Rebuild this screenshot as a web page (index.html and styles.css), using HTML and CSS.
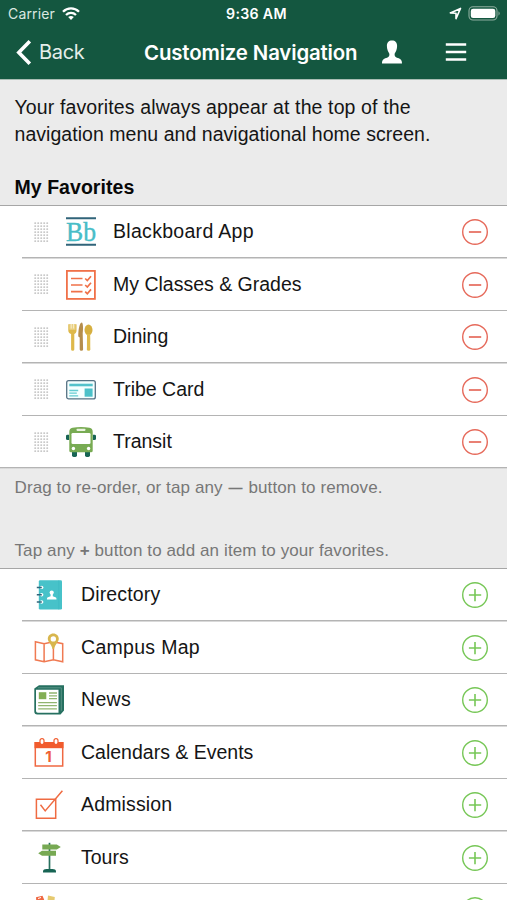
FILE: index.html
```html
<!DOCTYPE html>
<html lang="en">
<head>
<meta charset="utf-8">
<title>Customize Navigation</title>
<link rel="stylesheet" href="styles.css">
</head>
<body>
<svg width="0" height="0" class="defs" aria-hidden="true">
  <defs>
    <pattern id="dots" width="3" height="3" patternUnits="userSpaceOnUse"><rect x=".3" y=".3" width="1.8" height="1.8" rx=".5" fill="#c9c9c9"/></pattern>
    <symbol id="grip" viewBox="0 0 15 21"><rect width="15" height="21" fill="url(#dots)"/></symbol>
    <symbol id="minus" viewBox="0 0 28 28"><g fill="none" stroke="#e66a5b"><circle cx="14" cy="14" r="12.3" stroke-width="1.4"/><path d="M7.9 14h12.3" stroke-width="1.7"/></g></symbol>
    <symbol id="plus" viewBox="0 0 28 28"><g fill="none" stroke="#77c757"><circle cx="14" cy="14" r="12.3" stroke-width="1.4"/><path d="M7.9 14h12.3M14 7.9v12.3" stroke-width="1.6"/></g></symbol>
  </defs>
</svg>
<header class="header">
  <div class="status">
    <span class="carrier">Carrier</span>
    <svg class="wifi" width="18" height="13" viewBox="0 0 18 13"><g fill="none" stroke="#fff" stroke-width="2.3"><path d="M1 4.8C5.5.3 12.5.3 17 4.8"/><path d="M4 8c2.9-2.8 7.1-2.8 10 0"/></g><path d="M6.2 10.1q2.8-2.2 5.6 0L9 12.9z" fill="#fff"/></svg>
    <span class="time">9:36 AM</span>
    <svg class="arrow" width="13" height="13" viewBox="0 0 13 13"><path d="M1.300 5.900L11.500 1.400 7 11.600V6.200z" fill="none" stroke="#fff" stroke-width="1.600" stroke-linejoin="round"/></svg>
    <svg class="battery" width="33" height="15" viewBox="0 0 33 15"><rect x="1" y=".8" width="28" height="13.2" rx="4" fill="none" stroke="#8eae9f" stroke-width="1.1"/><rect x="2.8" y="2.7" width="24.5" height="9.4" rx="2.3" fill="#fff"/><path d="M30.5 5.2q2.4 2.2 0 4.5z" fill="#8eae9f"/></svg>
  </div>
  <div class="navbar">
    <svg class="chevron" width="16" height="27" viewBox="0 0 16 27"><path d="M13.8 2.2L2.8 13.4l11 11.3" fill="none" stroke="#fff" stroke-width="3.6"/></svg>
    <span class="back">Back</span>
    <h1 class="title">Customize Navigation</h1>
    <svg class="person" width="22" height="24" viewBox="0 0 22 24"><path d="M11 .5c3.2 0 5.2 2 5.1 5.5 0 1.7-.3 3.1-.8 4.6-.5 1.4-1.6 2.4-1.7 3.7-.1 2.6 1.2 3 3.2 3.7 2.8.9 4.2 1.8 4.2 5.6H1c0-3.8 1.4-4.7 4.2-5.6 2-.7 3.3-1.1 3.2-3.7-.1-1.3-1.2-2.3-1.7-3.7C6.200 9.100 5.900 7.700 5.900 6 5.800 2.500 7.800.5 11 .5z" fill="#fff"/></svg>
    <svg class="menu" width="22" height="20" viewBox="0 0 22 20"><path d="M.8 2.500h20.400M.8 10h20.400M.8 17.500h20.400" stroke="#fff" stroke-width="2.400"/></svg>
  </div>
</header>
<main>
  <section class="intro">
    <p class="lead"><span class="loose">Your favorites always appear at the top of the</span><br>navigation menu and navigational home screen.</p>
    <h2 class="heading">My Favorites</h2>
  </section>
  <ul class="list">
    <li class="row"><svg class="grip"><use href="#grip"/></svg>
      <svg class="icon" viewBox="0 0 30 30"><path d="M0 1.300h30M0 27.800h30" stroke="#31647a" stroke-width="1.900"/><text x="0" y="24.200" class="bb" textLength="30" lengthAdjust="spacingAndGlyphs">Bb</text></svg>
      <span class="label wide">Blackboard App</span><svg class="action"><use href="#minus"/></svg></li>
    <li class="row"><svg class="grip"><use href="#grip"/></svg>
      <svg class="icon" viewBox="0 0 30 30"><g fill="none" stroke="#f07149" stroke-width="1.800"><rect x=".9" y=".9" width="28" height="28"/><path d="M5 8.500h11.500M5 15h11.500M5 21.700h11.500M19.200 8.500l2.100 2 3.700-4.300M19.200 15l2.100 2 3.700-4.300M19.200 21.700l2.100 2 3.700-4.300" stroke-width="1.700"/></g></svg>
      <span class="label">My Classes &amp; Grades</span><svg class="action"><use href="#minus"/></svg></li>
    <li class="row"><svg class="grip"><use href="#grip"/></svg>
      <svg class="icon" viewBox="0 0 30 30"><path d="M2.300 2.300h8.200v6.200c0 1.800-.9 2.900-2.200 3.400v15.600q0 1.300-1.600 1.300t-1.600-1.300V11.900c-1.700-.5-2.800-1.600-2.800-3.400z" fill="#deb84a"/><path d="M3.300 2h6.200v5.800H3.300z" fill="#ead184"/><path d="M5.200 2v4.500M7.600 2v4.500" stroke="#fff" stroke-width=".6"/><path d="M12.300 14.500C12.300 7 13.600.6 16 .6c1.300 1.700 1.200 6.900.7 10.800l.4 16q0 1.400-1.700 1.400t-1.700-1.400V15.500z" fill="#b58d4c"/><ellipse cx="22.500" cy="7.900" rx="4" ry="5.300" fill="#d6af3f"/><path d="M21 12h3.200l.1 15.500q0 1.300-1.700 1.300t-1.700-1.300z" fill="#dfba4b"/></svg>
      <span class="label">Dining</span><svg class="action"><use href="#minus"/></svg></li>
    <li class="row"><svg class="grip"><use href="#grip"/></svg>
      <svg class="icon" viewBox="0 0 30 30"><rect x=".7" y="5.600" width="28.600" height="18.300" rx="2" fill="#f5ffff" stroke="#567284" stroke-width="1.300"/><path d="M3.300 10h23.400" stroke="#55c2cb" stroke-width="2.600"/><path d="M3.300 15.500h8.900M3.300 18.200h7.500M3.300 20.900h8.900" stroke="#65cbd1" stroke-width="1.300"/><path d="M18.600 13.500h8v8.200h-8z" fill="#4bc1c9"/></svg>
      <span class="label">Tribe Card</span><svg class="action"><use href="#minus"/></svg></li>
    <li class="row"><svg class="grip"><use href="#grip"/></svg>
      <svg class="icon" viewBox="0 0 30 30"><path d="M0 9q0-1.200 1.400-1.200h1.800V13H1.500Q0 13 0 11.700zM30 9q0-1.200-1.400-1.200h-1.800V13h1.700q1.500 0 1.500-1.300z" fill="#176454"/><rect x="6" y="23" width="5" height="7" rx="1.700" fill="#176454"/><rect x="19" y="23" width="5" height="7" rx="1.700" fill="#176454"/><path d="M6.500.7Q15-.7 23.500.7q3.200.4 3.200 4v19q0 1.600-1.700 1.600H5q-1.700 0-1.700-1.600v-19q0-3.600 3.200-4z" fill="#78ab53"/><rect x="10.500" y="1.700" width="9" height="2.200" rx=".8" fill="#eaf3df"/><rect x="5.500" y="5.900" width="19" height="11.200" rx="1.300" fill="#fff"/><circle cx="7.400" cy="21.500" r="1.700" fill="#fff"/><circle cx="22.600" cy="21.500" r="1.700" fill="#fff"/></svg>
      <span class="label">Transit</span><svg class="action"><use href="#minus"/></svg></li>
  </ul>
  <section class="hints">
    <p class="hint">Drag to re-order, or tap any <b class="dash">—</b> button to remove.</p>
    <p class="hint">Tap any <b>+</b> button to add an item to your favorites.</p>
  </section>
  <ul class="list">
    <li class="row"><svg class="icon" viewBox="0 0 30 30"><rect x="4.800" y=".3" width="23.200" height="29.300" rx="1.300" fill="#47c2c9"/><path d="M24.800.3v29.300" stroke="#39b4bf" stroke-width=".5"/><g fill="#fff"><circle cx="7.700" cy="7.400" r="1.700"/><circle cx="7.700" cy="14.700" r="1.700"/><circle cx="7.700" cy="22" r="1.700"/><circle cx="17.700" cy="12.600" r="2.100"/><path d="M16.600 14h2.200v2.300l3.200 1.300q.5.300.5 2h-9.600q0-1.700.5-2l3.200-1.300z"/></g><path d="M2.800 7.400h5M2.800 14.700h5M2.800 22h5" stroke="#31647a" stroke-width="1.500"/></svg>
      <span class="label medium">Directory</span><svg class="action"><use href="#plus"/></svg></li>
    <li class="row"><svg class="icon" viewBox="0 0 30 30"><path d="M1.400 8.700l8.700 2 9.300-2 9.300 2v18.100l-9.300-2-9.300 2-8.700-2zM10.100 10.700v18.100M19.400 8.700v18.100" fill="none" stroke="#f07a52" stroke-width="1.500"/><path d="M19.300.4c-3.200 0-5.500 2.400-5.500 5.400 0 3.400 3.700 5.200 4.700 10.200h1.600c1-5 4.700-6.800 4.700-10.200 0-3-2.300-5.400-5.500-5.400z" fill="#d8b64d"/><circle cx="19.300" cy="5.900" r="2.700" fill="#fff"/></svg>
      <span class="label wide">Campus Map</span><svg class="action"><use href="#plus"/></svg></li>
    <li class="row"><svg class="icon" viewBox="0 0 30 30"><path d="M5 .3h25v25.300l-3.500 4H3.300Q.3 29.600.3 26.600V3.500z" fill="#267060"/><path d="M4 2.800h23.300v23" fill="none" stroke="#79aa9e" stroke-width=".6"/><path d="M2 4.700h22.500v23.100H3.800Q2 27.800 2 26z" fill="#fff"/><path d="M4.800 7.200h7.500v7H4.800z" fill="#83ae55"/><path d="M15 8h8M15 10.800h8M15 13.600h8M4.200 17.600h18.700M4.200 20.700h18.700M4.200 23.900h18.700" stroke="#91b570" stroke-width="1.300"/></svg>
      <span class="label wide">News</span><svg class="action"><use href="#plus"/></svg></li>
    <li class="row"><svg class="icon" viewBox="0 0 30 30"><path d="M1.300 4.700h27.400V28H1.300z" fill="#fff" stroke="#ef6842" stroke-width="1.500"/><path d="M.5 4h29v6.200H.5z" fill="#f15b2d"/><rect x="6" y=".6" width="4" height="6" rx="2" fill="#fff" stroke="#f15b2d" stroke-width="1.200"/><rect x="20" y=".6" width="4" height="6" rx="2" fill="#fff" stroke="#f15b2d" stroke-width="1.200"/><text x="11.300" y="23.800" class="day">1</text></svg>
      <span class="label">Calendars &amp; Events</span><svg class="action"><use href="#plus"/></svg></li>
    <li class="row"><svg class="icon" viewBox="0 0 30 30"><g fill="none" stroke="#ef6b42" stroke-width="1.500"><path d="M2.400 9.300h19.300v19H2.400z"/><path d="M6.500 14.800l4.700 6.100L28.400.8"/></g></svg>
      <span class="label medium">Admission</span><svg class="action"><use href="#plus"/></svg></li>
    <li class="row"><svg class="icon" viewBox="0 0 30 30"><path d="M15.500-.2v27" stroke="#28705e" stroke-width="1.700"/><path d="M8.300 1.500h14.500l4 2.500-4 2.500H8.300zM22 7.800v5H8L4.200 10.300 8 7.800z" fill="#77a953"/><path d="M9 29.500v-1.200q.3-2.300 3.500-2.300h6q3.200 0 3.500 2.300v1.200z" fill="#176454"/></svg>
      <span class="label">Tours</span><svg class="action"><use href="#plus"/></svg></li>
    <li class="row"><svg class="icon" viewBox="0 0 30 30"><path d="M2 2.300l6.500-1.600 1.700 4-7.500 7z" fill="#ef6842"/><path d="M4 3.500l3-1" stroke="#fff"/><path d="M14 .5l6.800 1.400-.8 9h-7z" fill="#e6ca70"/></svg>
      <span class="label"></span><svg class="action"><use href="#plus"/></svg></li>
  </ul>
</main>
</body>
</html>
```
FILE: styles.css
```css
* { box-sizing: border-box; }
html, body { height: 900px; overflow: hidden; }
body, p, h1, h2, ul { margin: 0; padding: 0; }
body {
  display: flex;
  flex-direction: column;
  width: 507px;
  background: #ebebeb;
  color: #151515;
  font-family: "Liberation Sans", Arial, sans-serif;
}
.defs { position: absolute; }
svg { display: block; flex: none; }
.header { height: 79px; flex: none; background: #145740; color: #fff; font-family: Inter, sans-serif; }
main { border-top: 1px solid #a9bdb4; }
.status { display: flex; align-items: center; height: 27px; padding: 0 6px 0 8px; }
.carrier { width: 47px; margin-right: 7px; font-size: 14px; letter-spacing: .15px; color: #dbe8e1; white-space: nowrap; }
.time { width: 62px; margin-left: 146px; font-size: 14.2px; font-weight: 600; letter-spacing: .3px; white-space: nowrap; }
.arrow { margin-left: auto; }
.battery { margin-left: 6px; }
.navbar { display: flex; align-items: center; height: 50px; padding-left: 16px; }
.back { width: 46px; margin-left: 7px; font-size: 20px; letter-spacing: -.3px; color: #e5efea; }
.title { width: 214px; margin-left: 59px; font-size: 20.4px; font-weight: 600; letter-spacing: -.14px; white-space: nowrap; }
.person { margin-left: 23px; }
.menu { margin-left: 42px; }
.intro { height: 125px; padding: 14px 14.5px 0; }
.lead { font-size: 19.5px; line-height: 27px; letter-spacing: .04px; white-space: nowrap; }
.loose { letter-spacing: .12px; }
.heading { margin-top: 26px; font-size: 19.5px; line-height: 27px; letter-spacing: .05px; color: #080808; }
.list { list-style: none; background: #fff; border-top: 1.5px solid #a6a6a6; }
.row { display: flex; align-items: center; height: 52.5px; padding: 0 18px 0 34px; background: linear-gradient(#b4b4b4, #b4b4b4) 22px 100% / 100% 1.5px no-repeat; }
.row:last-child { background-position: 0 100%; }
.grip { width: 15px; height: 21px; margin-right: 17px; }
.icon { width: 30px; height: 30px; margin-right: 17px; overflow: visible; }
.label { flex: 1; padding-bottom: 2px; font-size: 19.5px; line-height: 24px; white-space: nowrap; }
.wide { letter-spacing: .3px; }
.medium { letter-spacing: .15px; }
.action { width: 28px; height: 28px; }
.bb { font: 27px "Liberation Serif", serif; fill: #48bdc7; stroke: #48bdc7; stroke-width: .4px; }
.day { font: 700 15px Inter, sans-serif; fill: #ef6034; }
.hints { height: 99.5px; padding: 7px 14.5px 0; color: #777; }
.hint { font-size: 17px; line-height: 24px; letter-spacing: .11px; white-space: nowrap; }
.hint + .hint { margin-top: 39px; }
.dash { margin: 0 1px; font-size: 14px; }
```
